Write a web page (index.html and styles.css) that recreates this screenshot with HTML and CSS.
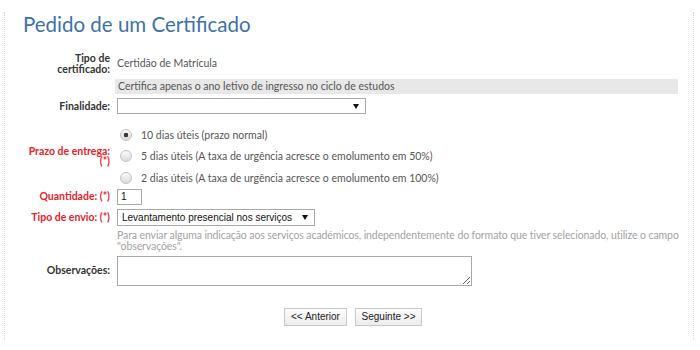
FILE: index.html
```html
<!DOCTYPE html>
<html lang="pt">
<head>
    <meta charset="UTF-8">
    <meta name="viewport" content="width=device-width, initial-scale=1.0">
    <title>Pedido de um Certificado</title>
    <link rel="stylesheet" href="styles.css">
</head>
<body>
    <div class="page">
        <h1 class="title">Pedido de um Certificado</h1>

        <!-- Certificate request form -->
        <form class="form">
            <div class="label row-tipo">Tipo de<br>certificado:</div>
            <div class="value row-tipo">Certidão de Matrícula</div>

            <div class="row-note"></div>
            <div class="note row-note">Certifica apenas o ano letivo de ingresso no ciclo de estudos</div>

            <label class="label row-fin" for="finalidade">Finalidade:</label>
            <div class="row-fin">
                <span class="select-wrap"><select id="finalidade" class="select select-wide"><option></option></select></span>
            </div>

            <div class="label required row-prazo">Prazo de entrega:<br>(*)</div>
            <div class="radios row-prazo">
                <label class="radio"><input type="radio" name="prazo" checked> 10 dias úteis (prazo normal)</label>
                <label class="radio"><input type="radio" name="prazo"> 5 dias úteis (A taxa de urgência acresce o emolumento em 50%)</label>
                <label class="radio"><input type="radio" name="prazo"> 2 dias úteis (A taxa de urgência acresce o emolumento em 100%)</label>
            </div>

            <label class="label required row-qtd" for="quantidade">Quantidade: (*)</label>
            <div class="row-qtd"><input type="text" id="quantidade" class="qty" value="1"></div>

            <label class="label required row-envio" for="envio">Tipo de envio: (*)</label>
            <div class="row-envio">
                <span class="select-wrap"><select id="envio" class="select select-envio"><option>Levantamento presencial nos serviços</option></select></span>
            </div>

            <div class="row-help"></div>
            <div class="help row-help">Para enviar alguma indicação aos serviços académicos, independentemente do formato que tiver selecionado, utilize o campo "observações".</div>

            <label class="label row-obs" for="observacoes">Observações:</label>
            <div class="row-obs"><textarea id="observacoes" class="obs"></textarea></div>
        </form>

        <div class="actions">
            <button type="button" class="btn btn-prev">&lt;&lt; Anterior</button>
            <button type="button" class="btn btn-next">Seguinte &gt;&gt;</button>
        </div>
    </div>
</body>
</html>
```

FILE: styles.css
```css
body {
    margin: 0;
    background-color: #fff;
    font-family: Lato, "Open Sans", sans-serif;
    font-size: 10.5px;
    color: #555;
}
.page {
    margin: 12px 6px 0 4px;
    height: 328px;
    border-left: 1px dotted #d6d6d6;
    border-right: 1px dotted #d6d6d6;
}
.title {
    margin: 0 0 17px 18px;
    font-family: Lato, sans-serif;
    font-size: 20.5px;
    font-weight: normal;
    line-height: 24px;
    color: #3d72aa;
}
.form {
    display: grid;
    grid-template-columns: 98px 1fr;
    column-gap: 7px;
    align-items: center;
    padding: 0 15px 0 7px;
}
.label {
    text-align: right;
    font-weight: bold;
    color: #333;
    line-height: 10.5px;
}
.required {
    color: #e5222b;
}
.row-note { margin-top: 5px; }
.row-fin { margin-top: 4px; }
.row-prazo { margin-top: 10px; }
.row-qtd { margin-top: 0; }
.row-envio { margin-top: 4px; }
.row-help { margin-top: 4px; }
.row-obs { margin-top: 4px; }
.value {
    line-height: 21px;
}
.note {
    margin-left: -2px;
    padding-left: 3px;
    height: 15px;
    line-height: 15px;
    background-color: #e8e8e8;
}
.select-wrap {
    position: relative;
    display: inline-block;
    vertical-align: top;
}
.select-wrap::after {
    content: "";
    position: absolute;
    top: 6px;
    right: 7px;
    border-left: 3px solid transparent;
    border-right: 3px solid transparent;
    border-top: 5px solid #111;
    pointer-events: none;
}
.select {
    -webkit-appearance: none;
    appearance: none;
    display: block;
    margin: 0;
    padding: 0 0 0 4px;
    height: 17px;
    border: 1px solid #a9a9a9;
    border-radius: 0;
    background-color: #fff;
    font-family: "Liberation Sans", Arial, sans-serif;
    font-size: 10px;
    color: #111;
}
.select-wide {
    width: 249px;
    height: 16px;
}
.select-envio {
    width: 198px;
}
.radios {
    display: flex;
    flex-direction: column;
}
.radio {
    display: flex;
    align-items: center;
    height: 21.5px;
}
.radio input {
    -webkit-appearance: none;
    appearance: none;
    margin: 0 9px 0 3px;
    width: 12px;
    height: 12px;
    border: 1px solid #c2c2c2;
    border-radius: 50%;
    background: linear-gradient(#fbfbfb, #dadada);
}
.radio input:checked {
    background: radial-gradient(circle, #3a3a3a 0 2px, transparent 2.6px), linear-gradient(#fbfbfb, #dadada);
}
.qty {
    display: block;
    margin: 0;
    padding: 0 0 0 3px;
    width: 25px;
    height: 16px;
    box-sizing: border-box;
    border: 1px solid #a9a9a9;
    font-family: "Liberation Sans", Arial, sans-serif;
    font-size: 10px;
    color: #111;
}
.help {
    margin-right: -10px;
    line-height: 11px;
    letter-spacing: -0.1px;
    color: #a3a3a3;
}
.obs {
    display: block;
    margin: 0;
    width: 355px;
    height: 30px;
    box-sizing: border-box;
    border: 1px solid #a9a9a9;
    font-family: "Liberation Sans", Arial, sans-serif;
    font-size: 10px;
}
.actions {
    display: flex;
    justify-content: center;
    gap: 8px;
    margin-top: 22px;
    padding-left: 8px;
}
.btn {
    margin: 0;
    padding: 0;
    height: 18px;
    border: 1px solid #c9c9c9;
    border-radius: 0;
    background: linear-gradient(#fdfdfd, #ececec);
    font-family: "Liberation Sans", Arial, sans-serif;
    font-size: 10px;
    color: #222;
}
.btn-prev { width: 63px; }
.btn-next { width: 67px; }
```
